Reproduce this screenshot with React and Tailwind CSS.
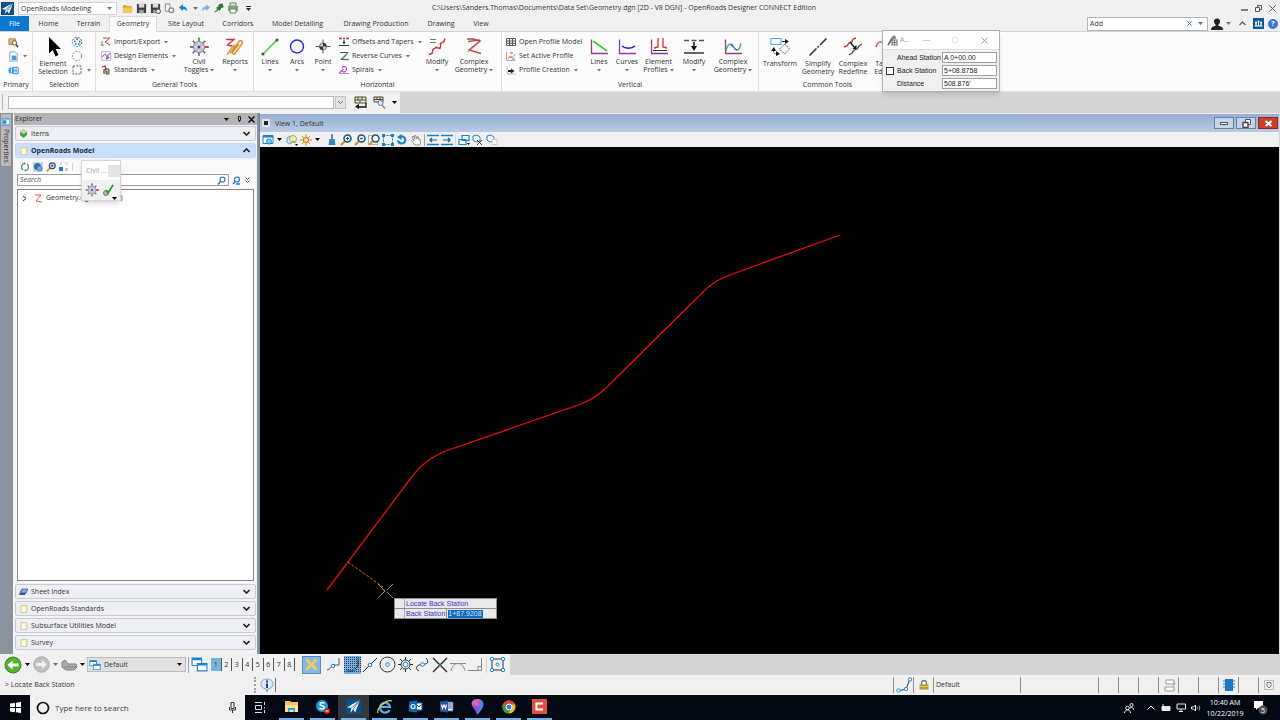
import React, { useState } from 'react';
import clsx from 'clsx';

const BLUE = '#1883c9';
const INK = '#222222';

// Small wrapper so every drawing shares the same svg setup
function Icon({ w = 10, h = w, box, className, children }) {
  return (
    <svg
      width={w}
      height={h}
      viewBox={box || `0 0 ${w} ${h}`}
      fill="none"
      className={clsx('shrink-0', className)}
      aria-hidden="true"
    >
      {children}
    </svg>
  );
}

const Caret = ({ className = 'text-gray-600' }) => (
  <Icon w={5} h={3} className={className}>
    <path d="M0 0h5L2.5 3z" fill="currentColor" />
  </Icon>
);

// Lighter, narrower arrow used under the ribbon labels
const SmallCaret = () => (
  <Icon w={4} h={3} className="text-gray-500">
    <path d="M0 0h4L2 2.500z" fill="currentColor" />
  </Icon>
);

const Magnifier = ({ w = 10, color = BLUE, mark, className }) => (
  <Icon w={w} box="0 0 12 12" className={className}>
    <path d="M1 11l4-4" stroke="#e08a2c" strokeWidth="2" />
    <circle cx="7.5" cy="4.5" r="3.5" stroke={color} strokeWidth="1.5" fill="#eef6fb" />
    {mark && <path d={mark} stroke={color} strokeWidth="1.2" />}
  </Icon>
);

const Gear = ({ w = 20 }) => (
  <Icon w={w} box="0 0 20 20">
    <path d="M10 1v18M1 10h18M3.8 3.8l12.4 12.4M16.2 3.8L3.8 16.2" stroke="#77738f" strokeWidth="1.8" />
    <circle cx="10" cy="10" r="5.6" fill="#c2bfd2" stroke="#8d89a5" strokeWidth="1" />
    <path d="M10 .5v3" stroke="#3fae49" strokeWidth="1.6" />
    <path d="M16.5 10H20" stroke="#d33" strokeWidth="1.6" />
    <path d="M10 5.5v9M5.5 10h9" stroke="#e7e5f0" strokeWidth="1" />
    <circle cx="10" cy="10" r="1.5" fill="#4a3f86" />
  </Icon>
);

const AppLogo = ({ w = 13 }) => (
  <Icon w={w} box="0 0 14 14">
    <rect width="14" height="14" fill="#0c4f86" />
    <path d="M1 7.6L13 1 8.6 12.6 6.6 9.6 4 13 5 8.4z" fill="#fff" />
    <path d="M5 8.4L13 1 6.6 9.6" stroke="#0c4f86" strokeWidth=".7" />
  </Icon>
);

const Windows2 = ({ w = 14 }) => (
  <Icon w={w} box="0 0 16 14">
    <path d="M1 1h9v7H1z" fill="#fff" stroke={BLUE} />
    <path d="M1 2h9" stroke={BLUE} strokeWidth="2" />
    <path d="M6 6h9v7H6z" fill="#fff" stroke={BLUE} />
    <path d="M6 7h9" stroke={BLUE} strokeWidth="2" />
  </Icon>
);

const Folder = () => (
  <Icon w={11} box="0 0 12 12">
    <path d="M1 2.5h4l1 1h5v7H1z" fill="#d79b2b" />
    <path d="M1 5h10.5l-1 5.5H1z" fill="#f3c75b" />
  </Icon>
);

const Floppy = ({ extra }) => (
  <Icon w={11} box="0 0 12 12">
    <path d="M1 1h10v10H1z" fill="#3d4045" />
    <path d="M3 1h6v4H3z" fill="#d8dade" />
    <path d="M3.5 7.5h5V11h-5z" fill="#9fa3a8" />
    {extra && <circle cx="9" cy="9" r="2.5" fill="#e8e8e8" stroke="#4a4a4a" />}
  </Icon>
);

const PageGear = () => (
  <Icon w={11} box="0 0 12 12">
    <path d="M1.5 1h5v8h-5z" fill="#f3f3f3" stroke="#8a8a8a" />
    <circle cx="8" cy="8" r="2.6" fill="#ececec" stroke="#8a8a8a" strokeWidth="1.4" />
  </Icon>
);

const Undo = ({ flip, color = BLUE }) => (
  <Icon w={10} box="0 0 12 12" className={flip ? '-scale-x-100' : ''}>
    <path d="M1 5.5L6 1.5v2.6c3 .1 5 2 5 6-1.2-2-2.6-2.7-5-2.7v2.1z" fill={color} />
  </Icon>
);

const Pin = () => (
  <Icon w={10} box="0 0 12 12">
    <path d="M6 2l4-1 1 4-2.5.5-2 3.500L3 6l3-2z" fill="#2c7a35" stroke="#2c7a35" />
    <path d="M5 7.5L1 11" stroke="#2c7a35" strokeWidth="1.3" />
  </Icon>
);

const Printer = () => (
  <Icon w={12} box="0 0 12 12">
    <path d="M3 1h6v3H3z" fill="#e4eee2" stroke="#6c8a67" />
    <path d="M1 4h10v5H1z" fill="#7fa578" />
    <path d="M3 7h6v4H3z" fill="#f5f8f4" stroke="#6c8a67" />
  </Icon>
);

// Ribbon drawings
const Cursor = () => (
  <Icon w={20} className="ml-1">
    <path d="M4 0v16.5l3.700-3.400 2.800 6.400 3-1.400-2.800-6.200h5.300z" fill="#000" />
  </Icon>
);

const LinesIcon = () => (
  <Icon w={20}>
    <path d="M3 17L17 3" stroke="#4fd04c" strokeWidth="1.6" />
    <circle cx="3" cy="17" r="1.6" fill="#555" />
    <circle cx="17" cy="3" r="1.6" fill="#555" />
  </Icon>
);

const ArcsIcon = () => (
  <Icon w={20}>
    <circle cx="10" cy="9.5" r="6.5" stroke="#2a2ad4" strokeWidth="1.4" />
  </Icon>
);

const PointIcon = () => (
  <Icon w={20}>
    <path d="M10 2.500v14M2.500 9.500h15" stroke="#555" />
    <circle cx="10" cy="9.5" r="3.5" fill="#cfcfcf" stroke="#777" />
    <path d="M10 6A3.500 3.500 0 0 1 13.500 9.500H10zM10 13A3.500 3.500 0 0 1 6.500 9.500H10z" fill="#333" />
  </Icon>
);

const ReportsIcon = () => (
  <Icon w={20}>
    <path d="M1 2.5h8L2.5 8 10 10" stroke="#d22f2f" strokeWidth="1.3" />
    <path d="M5 16.5L14 4.5c1.5-2 4.500 0 3.200 2L10 16.500c-1 1.500-3.200 0-2.200-1.400L14 7" stroke="#d9922f" strokeWidth="1.5" />
    <path d="M2 17.5L9.5 7.5" stroke="#e0a551" strokeWidth="1.5" />
  </Icon>
);

const ModifyH = () => (
  <Icon w={20}>
    <path d="M3 2.500h6M3 5.500h6" stroke="#777" />
    <path d="M2 17.500l3-1 1-4 3-2 4 1 1-5 3-2 1-3" stroke="#c93434" strokeWidth="1.4" />
    <path d="M9 10l5-5" stroke="#999" strokeDasharray="1.5 1" />
  </Icon>
);

const ComplexH = () => (
  <Icon w={20}>
    <path d="M4 4.500L16 3" stroke="#777" strokeWidth="1.4" />
    <path d="M3 2h6l7 2L5 13l12 3.500" stroke="#d03a3a" strokeWidth="1.4" />
    <path d="M4 15L13 7" stroke="#888" />
  </Icon>
);

const Axes = ({ children }) => (
  <Icon w={20}>
    <path d="M2.500 2.500v14h16.500" stroke="#8b3f96" strokeWidth="1.3" />
    {children}
  </Icon>
);

const ModifyV = () => (
  <Icon w={20}>
    <path d="M0 3.500h20" stroke="#555" strokeDasharray="5 2.5" strokeWidth="1.3" />
    <path d="M0 16h20" stroke="#555" strokeWidth="1.8" />
    <path d="M10 5v5" stroke="#111" strokeWidth="1.5" />
    <path d="M7 9h6l-3 5z" fill="#111" />
  </Icon>
);

const TransformIcon = () => (
  <Icon w={20}>
    <path d="M1 1.500h10v6H1z" stroke="#54b3e4" strokeWidth="1.2" />
    <path d="M12 4.500h4" stroke="#111" />
    <path d="M15 2l4 2.500L15 7z" fill="#111" />
    <path d="M14.500 7l5 5-5 5-5-5z" stroke="#444" strokeDasharray="1.6 1" />
    <path d="M1 14l3-4 2 4zM6 14l4 3-4 2z" fill="#111" />
    <path d="M3.500 13c0 3 1 4 3 4" stroke="#111" strokeDasharray="1.5 1" />
  </Icon>
);

const SimplifyIcon = () => (
  <Icon w={20}>
    <path d="M1.500 18.500l7-7M9.500 10.500l1.500-1.500M12 8l6.500-6.500" stroke="#333" strokeWidth="1.6" />
  </Icon>
);

const RedefineIcon = () => (
  <Icon w={20}>
    <path d="M1 10l3-1 2-3 3-1 1-3 3-1" stroke="#c93a3a" strokeWidth="1.4" />
    <path d="M6 18l3-2 2-3 3-1 2-3 3-2" stroke="#555" strokeWidth="1.4" />
    <path d="M7 5l5 6" stroke="#111" strokeWidth="1.3" />
    <path d="M9.500 12h4V8z" fill="#111" />
  </Icon>
);

const TableIcon = () => (
  <Icon w={20}>
    <path d="M2 10c2-7 6-6 9-2" stroke="#d34a4a" strokeWidth="1.4" />
    <path d="M8 17l6-7 3 3-6 5z" fill="#b87333" />
  </Icon>
);

const smallIcons = {
  folderSearch: (
    <Icon w={11} box="0 0 12 12">
      <path d="M1 2h7v6H1z" fill="#edc168" stroke="#a97b2a" />
      <circle cx="7" cy="6.5" r="2.5" fill="#f7f3e6" stroke="#6b4a1a" />
      <path d="M9 8.500l2 2.500" stroke="#333" strokeWidth="1.6" />
    </Icon>
  ),
  page: (
    <Icon w={11} box="0 0 12 12">
      <path d="M2 1h6l2 2v8H2z" fill="#fff" stroke="#8c9cad" />
      <path d="M4 5h5v5H4z" fill="#3f9fdc" />
    </Icon>
  ),
  info: (
    <Icon w={11} box="0 0 12 12">
      <path d="M5 2.500h6v7H5z" fill="#fff" stroke={BLUE} />
      <path d="M7 4.500h3M7 6h3M7 7.500h3" stroke={BLUE} strokeWidth=".8" />
      <circle cx="3.7" cy="6" r="3.2" fill="#2e9be0" />
      <path d="M3.700 3.800v4.500" stroke="#fff" />
    </Icon>
  ),
  selAll: (
    <Icon w={12}>
      <circle cx="6" cy="6" r="4.7" stroke="#2b6f9f" strokeDasharray="2 1.2" />
      <path d="M5.500 3h1.500M3 5.500h1.500M8 5.500h1.500M4 8h1.500M7 8h1.500" stroke="#1c5b8c" strokeWidth="1.4" />
    </Icon>
  ),
  selNone: (
    <Icon w={12}>
      <circle cx="6" cy="6" r="4.5" stroke="#888" strokeDasharray="2 1.2" />
    </Icon>
  ),
  selBox: (
    <Icon w={12}>
      <path d="M2 2h8v8H2z" stroke="#555" strokeDasharray="2 1.3" />
    </Icon>
  ),
  importExport: (
    <Icon w={10}>
      <path d="M2 1h7L4 5l5 3" stroke="#c94545" />
      <path d="M1 4v5M0 7.500L1.500 9 3 7.500" stroke="#3a9d46" />
    </Icon>
  ),
  design: (
    <Icon w={10}>
      <path d="M.5.5v9h9v-9z" stroke="#cbbbe0" fill="#f5effa" />
      <path d="M1 6l3-3 2 3 3-4" stroke="#b84bc0" />
      <path d="M5 8l3-2" stroke="#2f7fd0" strokeWidth="1.6" />
      <circle cx="6" cy="5" r="1" fill="#e8882f" />
    </Icon>
  ),
  standards: (
    <Icon w={10}>
      <path d="M1 2l3-1 1 3-2 1v4" stroke="#9b3030" strokeWidth="1.3" />
      <path d="M5 4h3v5H5z" stroke="#5d4b3a" fill="#dfcfa8" />
      <path d="M4 7h4" stroke="#2f8b50" />
    </Icon>
  ),
  offsets: (
    <Icon w={10}>
      <path d="M0 1.500h3M4 1.500h2M7 1.500h3" stroke="#c33" strokeWidth="1.3" />
      <path d="M0 8.500h10" stroke="#444" />
      <path d="M5 3v3" stroke="#222" />
      <path d="M3.500 5h3L5 7.500z" fill="#222" />
    </Icon>
  ),
  reverse: (
    <Icon w={10}>
      <path d="M1 1.500h8L2 8.500h8" stroke="#555" />
      <path d="M2 8c3-1 4-2 6-5" stroke="#31a047" strokeWidth="1.2" />
      <path d="M5 8.500h5" stroke="#2a6fc9" strokeWidth="1.3" />
    </Icon>
  ),
  spirals: (
    <Icon w={10}>
      <path d="M3.500 3.500C3 1 7.500.5 7.500 4S4 7.500 3 6M5 4.500c-3 0-3 3-5 3.500" stroke="#bb44c4" strokeWidth="1.1" />
      <path d="M0 8.500h10" stroke="#b78abf" />
    </Icon>
  ),
  table: (
    <Icon w={10}>
      <path d="M.5 1.500h9v7h-9zM.5 4h9M.5 6.300h9M3.500 1.500v7M6.500 1.500v7" stroke="#5b5363" />
    </Icon>
  ),
  profile: (
    <Icon w={10}>
      <path d="M.5 1v8.500h9" stroke="#b9a3c8" />
      <path d="M2 8l2-3 2 2 3-4" stroke="#e2813f" />
      <path d="M4 1h3v2H4zM6 7h3v2H6z" fill="#8fbbe6" />
      <circle cx="5" cy="6" r="1.2" fill="#e9a13a" />
    </Icon>
  ),
  creation: (
    <Icon w={10}>
      <path d="M1 1v8h9" stroke="#c3b6cc" />
      <path d="M2 5h3V3.500l3.500 2.500L5 8.500V7H2z" fill="#222" />
    </Icon>
  ),
};

const tabs = [
  ['Home', 'w-[39px]'],
  ['Terrain', 'w-[41px]'],
  ['Geometry', 'w-[48px]'],
  ['Site Layout', 'w-[58px]'],
  ['Corridors', 'w-[46px]'],
  ['Model Detailing', 'w-[73px]'],
  ['Drawing Production', 'w-[84px]'],
  ['Drawing', 'w-[46px]'],
  ['View', 'w-[34px]'],
];

function TitleBar() {
  return (
    <header className="flex h-4 items-center bg-[#f0f0f0] pl-px pr-1 text-[#333]">
      <AppLogo />
      <label className="relative ml-1 flex h-[13px] w-[99px] items-center border border-[#d0d0d0] bg-white">
        <select aria-label="Workflow" className="w-full appearance-none bg-white pl-[2px] text-[7px] leading-[11px] outline-none">
          <option>OpenRoads Modeling</option>
        </select>
        <Caret className="absolute right-1 text-gray-500" />
      </label>
      <div className="ml-[5px] flex items-center gap-[3px]">
        <button aria-label="Open"><Folder /></button>
        <button aria-label="Save"><Floppy /></button>
        <button aria-label="Save Settings"><Floppy extra /></button>
        <button aria-label="Settings"><PageGear /></button>
        <button aria-label="Undo" className="flex items-center gap-[5px]"><Undo /><Caret className="text-gray-500" /></button>
        <button aria-label="Redo"><Undo flip color="#7db8e0" /></button>
        <button aria-label="Pin"><Pin /></button>
        <button aria-label="Print"><Printer /></button>
        <button aria-label="Customize" className="ml-1 border-t border-gray-800 pt-px"><Caret className="text-gray-800" /></button>
      </div>
      <h1 className="flex-1 text-center text-[7px]">
        C:\Users\Sanders.Thomas\Documents\Data Set\Geometry.dgn [2D - V8 DGN] - OpenRoads Designer CONNECT Edition
      </h1>
      <div className="ml-[244px] flex items-center gap-[7px] text-gray-600">
        <button aria-label="Minimize"><Icon w={7}><path d="M0 5h7" stroke="currentColor" strokeWidth="1.5" /></Icon></button>
        <button aria-label="Restore"><Icon w={7}><path d="M.5 2.500h4v4h-4zM2.500 2.500v-2h4v4h-2" stroke="currentColor" /></Icon></button>
        <button aria-label="Close"><Icon w={7}><path d="M.5.5l6 6M6.500.5l-6 6" stroke="currentColor" /></Icon></button>
      </div>
    </header>
  );
}

function TabBar() {
  const [active, setActive] = useState('Geometry');
  return (
    <nav className="flex h-4 items-end border-b border-[#cfd2d8] bg-[#f0f0f0] text-[7px] text-[#333]">
      <button className="h-[15px] w-[29px] bg-[#0a78cf] text-white">File</button>
      {tabs.map(([name, width]) => (
        <button
          key={name}
          onClick={() => setActive(name)}
          className={clsx(
            'whitespace-nowrap text-center',
            width,
            active === name ? '-mb-px h-4 border-x border-t border-[#d9dbe0] bg-[#fbfbfb] pb-px' : 'h-[15px]'
          )}
        >
          {name}
        </button>
      ))}
      <div className="ml-auto flex h-[15px] items-center pr-[2px]">
        <label className="flex h-[14px] w-[121px] items-center border border-[#b5b5b5] bg-white pr-1">
          <input aria-label="Search ribbon" defaultValue="Add" className="min-w-0 flex-1 bg-white pl-[2px] outline-none" />
          <Icon w={5} className="mr-[6px]"><path d="M.5.5l4 4M4.500.5l-4 4" stroke="#2f7fc4" /></Icon>
          <Caret className="text-gray-500" />
        </label>
        <button aria-label="Account" className="ml-[3px] flex items-center gap-[3px]">
          <Icon w={12}>
            <circle cx="6" cy="3.5" r="3" fill="#1f2328" />
            <path d="M0 12c0-3 2-4 4.500-4V5h3v3C10 8 12 9 12 12z" fill="#1f2328" />
          </Icon>
          <Caret className="text-gray-500" />
        </button>
        <button aria-label="Collapse ribbon" className="ml-[8px]"><Icon w={7} h={5}><path d="M.5 4L3.500 1l3 3" stroke="#555" strokeWidth="1.2" /></Icon></button>
        <button aria-label="Connect" className="ml-[7px]">
          <Icon w={11}>
            <rect width="11" height="11" fill="#0f5694" />
            <circle cx="3" cy="4.5" r="1" fill="#fff" /><circle cx="5.5" cy="3.5" r="1" fill="#fff" /><circle cx="8" cy="4.5" r="1" fill="#fff" />
            <path d="M3 5v3M5.500 4v4M8 5v3M1.500 8h8" stroke="#fff" strokeWidth="1.2" />
          </Icon>
        </button>
        <button aria-label="Help" className="ml-1 flex h-[10px] w-[10px] items-center justify-center rounded-full bg-[#3c74cf] text-[7px] font-bold text-white">?</button>
      </div>
    </nav>
  );
}

function Group({ label, width, children }) {
  return (
    <section className={clsx('flex shrink-0 flex-col border-r border-[#dcdcdf]', width)}>
      <div className="flex flex-1">{children}</div>
      <h2 className="h-3 text-center leading-3">{label}</h2>
    </section>
  );
}

function BigButton({ icon, lines, width, caret, low }) {
  return (
    <button className={clsx('flex shrink-0 flex-col items-center whitespace-nowrap pt-[5px] leading-[8px]', width)}>
      {icon}
      <span className={low ? 'mt-[3px]' : 'mt-px'}>{lines[0]}</span>
      {lines[1] && (
        <span className="flex items-center gap-[2px]">
          {lines[1]}
          {caret && <SmallCaret />}
        </span>
      )}
      {!lines[1] && caret && <span className="mt-[3px] flex"><SmallCaret /></span>}
    </button>
  );
}

function SmallButton({ icon, label, caret, aria }) {
  return (
    <button aria-label={aria} className="flex h-[14px] items-center whitespace-nowrap">
      <span className="flex w-3 shrink-0 justify-center">{smallIcons[icon]}</span>
      {label && <span className="ml-[2px]">{label}</span>}
      {caret && <span className="ml-1 flex"><SmallCaret /></span>}
    </button>
  );
}

const SmallColumn = ({ className, children }) => (
  <div className={clsx('flex shrink-0 flex-col items-start pt-[3px]', className)}>{children}</div>
);

function Ribbon() {
  return (
    <div className="flex h-[60px] overflow-hidden border-b border-[#e2e2e2] bg-[#fbfbfb] text-[7px] text-[#333]">
      <Group label="Primary" width="w-[33px]">
        <SmallColumn className="pl-[7px]">
          <SmallButton icon="folderSearch" aria="Explorer" />
          <SmallButton icon="page" aria="Models" caret />
          <SmallButton icon="info" aria="Properties" />
        </SmallColumn>
      </Group>
      <Group label="Selection" width="w-[63px]">
        <BigButton icon={<Cursor />} lines={['Element', 'Selection']} width="w-10" low />
        <SmallColumn className="-ml-[2px]">
          <SmallButton icon="selAll" aria="Select All" />
          <SmallButton icon="selNone" aria="Select None" />
          <SmallButton icon="selBox" aria="Select By" caret />
        </SmallColumn>
      </Group>
      <Group label="General Tools" width="w-[158px]">
        <SmallColumn className="w-[85px] pl-1">
          <SmallButton icon="importExport" label="Import/Export" caret />
          <SmallButton icon="design" label="Design Elements" caret />
          <SmallButton icon="standards" label="Standards" caret />
        </SmallColumn>
        <BigButton icon={<Gear />} lines={['Civil', 'Toggles']} width="w-9" caret />
        <BigButton icon={<ReportsIcon />} lines={['Reports']} width="w-9" caret />
      </Group>
      <Group label="Horizontal" width="w-[248px]">
        <BigButton icon={<LinesIcon />} lines={['Lines']} width="w-8" caret />
        <BigButton icon={<ArcsIcon />} lines={['Arcs']} width="w-[22px]" caret />
        <BigButton icon={<PointIcon />} lines={['Point']} width="w-[30px]" caret />
        <SmallColumn className="w-[84px]">
          <SmallButton icon="offsets" label="Offsets and Tapers" caret />
          <SmallButton icon="reverse" label="Reverse Curves" caret />
          <SmallButton icon="spirals" label="Spirals" caret />
        </SmallColumn>
        <BigButton icon={<ModifyH />} lines={['Modify']} width="w-[30px]" caret />
        <BigButton icon={<ComplexH />} lines={['Complex', 'Geometry']} width="w-[44px]" caret />
      </Group>
      <Group label="Vertical" width="w-[257px]">
        <SmallColumn className="w-[83px] pl-[3px]">
          <SmallButton icon="table" label="Open Profile Model" />
          <SmallButton icon="profile" label="Set Active Profile" />
          <SmallButton icon="creation" label="Profile Creation" caret />
        </SmallColumn>
        <BigButton icon={<Axes><path d="M4 4l14 10" stroke="#3ecb3a" strokeWidth="1.6" /></Axes>} lines={['Lines']} width="w-[28px]" caret />
        <BigButton icon={<Axes><path d="M5 9c3 3 10 3 13 0" stroke="#2222c8" strokeWidth="1.6" /></Axes>} lines={['Curves']} width="w-[28px]" caret />
        <BigButton
          icon={
            <Axes>
              <path d="M5 11l4-1V1M18 11l-4-1V1" stroke="#d03434" strokeWidth="1.3" />
              <path d="M4 13.500h14" stroke="#333" />
            </Axes>
          }
          lines={['Element', 'Profiles']}
          width="w-[35px]"
          caret
        />
        <BigButton icon={<ModifyV />} lines={['Modify']} width="w-[36px]" caret />
        <BigButton
          icon={
            <Axes>
              <path d="M3 14c2-8 4-8 6-5" stroke="#44b64a" strokeWidth="1.3" />
              <path d="M8 7c3 2 3 6 6 6" stroke="#2a45c9" strokeWidth="1.3" />
              <path d="M14 13c3 0 3-4 4-7" stroke="#44b64a" strokeWidth="1.3" />
            </Axes>
          }
          lines={['Complex', 'Geometry']}
          width="w-[42px]"
          caret
        />
      </Group>
      <Group label="Common Tools" width="w-[138px]">
        <BigButton icon={<TransformIcon />} lines={['Transform']} width="w-[42px]" low />
        <BigButton icon={<SimplifyIcon />} lines={['Simplify', 'Geometry']} width="w-[34px]" low />
        <BigButton icon={<RedefineIcon />} lines={['Complex', 'Redefine']} width="w-[36px]" low />
        <BigButton icon={<TableIcon />} lines={['Table', 'Editor']} width="w-[26px]" low />
      </Group>
    </div>
  );
}

function KeyinBar() {
  return (
    <div className="flex h-[21px] bg-[#d5d5d5]">
      <div className="flex w-[400px] items-center bg-[#f0f0f0] pb-px pl-[2px]">
        <span className="mr-[5px] h-4 border-l border-[#b5b5b5]" />
        <input aria-label="Search tools" className="h-[13px] w-[326px] border border-[#b8b8b8] bg-white text-[7px]" />
        <button aria-label="History" className="ml-px flex h-[13px] w-[11px] items-center justify-center border border-[#c4c4c4] bg-[#e3e3e3]">
          <Icon w={5} h={3}><path d="M0 0l2.500 2.500L5 0" stroke="#777" /></Icon>
        </button>
        <button aria-label="Key-in" className="ml-2">
          <Icon w={13}>
            <path d="M1 1h11v6H1z" fill="#f5eeb8" stroke="#444" />
            <path d="M1 4h11M4 1v3M8 1v3M6 4v3" stroke="#444" />
            <path d="M12 7v4H4" stroke="#111" strokeWidth="1.3" />
            <path d="M5 8v5L1 10.500z" fill="#111" />
          </Icon>
        </button>
        <button aria-label="Find key-in" className="ml-[6px]">
          <Icon w={13}>
            <path d="M1 1h9v5H1z" fill="#f5eeb8" stroke="#444" />
            <path d="M1 3.500h9M4 1v3M7 1v3" stroke="#444" />
            <circle cx="7.5" cy="7" r="2.5" fill="#dceefa" stroke="#3f87bd" />
            <path d="M9 9l3 3.500" stroke="#d08a35" strokeWidth="1.6" />
          </Icon>
        </button>
        <button aria-label="More" className="ml-[6px]"><Caret className="text-black" /></button>
      </div>
    </div>
  );
}

const Cylinder = () => (
  <Icon w={8} h={9}>
    <path d="M1 1.500h6v7H1z" fill="#f6edcb" stroke="#d8cb9c" />
    <path d="M2 3h3v5H2z" fill="#fffbe9" />
  </Icon>
);

function Chevron({ up }) {
  return (
    <Icon w={7} h={5}>
      <path d={up ? 'M.5 4L3.500 1l3 3' : 'M.5 1l3 3 3-3'} stroke="#222" strokeWidth="1.6" />
    </Icon>
  );
}

function PanelRow({ icon, label, open }) {
  return (
    <button
      className={clsx(
        'flex h-[15px] w-full shrink-0 items-center rounded-[2px] border pl-1 pr-[5px] text-left text-[7px]',
        open ? 'border-[#c4dafa] bg-[#c9defb] font-bold text-[#1b2a3d]' : 'border-[#c9cbd2] bg-[#eeeff4] text-[#333]'
      )}
    >
      <span className="flex w-[7px] justify-center">{icon}</span>
      <span className="ml-1 flex-1">{label}</span>
      <Chevron up={open} />
    </button>
  );
}

function Explorer() {
  return (
    <aside className="flex w-[246px] shrink-0 flex-col border-r-2 border-[#8b939d] bg-[#f3f3f5] pl-px">
      <div className="flex h-3 shrink-0 items-center bg-[#b4b4b4] pl-px pr-[2px] text-[7px] text-[#333]">
        <h2 className="flex-1">Explorer</h2>
        <button aria-label="Panel menu"><Caret className="text-black" /></button>
        <button aria-label="Auto hide" className="ml-2"><Icon w={5} h={6}><path d="M1.500.5h2v4h-2zM2.500 4v2" stroke="#222" /></Icon></button>
        <button aria-label="Close panel" className="ml-[6px]"><Icon w={7}><path d="M.5.5l6 6M6.500.5l-6 6" stroke="#111" strokeWidth="1.5" /></Icon></button>
      </div>
      <div className="flex flex-1 flex-col gap-[2px] px-px pt-px">
        <PanelRow
          icon={<Icon w={7} h={9}><path d="M3.500 0L7 3v3L3.500 9 0 6V3z" fill="#4f9e3c" /><path d="M3.500 0L7 3 3.500 5 0 3z" fill="#b7d9ae" /></Icon>}
          label="Items"
        />
        <PanelRow icon={<Cylinder />} label="OpenRoads Model" open />
        <div className="flex flex-1 flex-col bg-[#fafafa] px-[2px] pb-px">
          <div className="flex h-[13px] items-center gap-[3px] pl-[3px]">
            <button aria-label="Refresh"><Icon w={10}><path d="M4 1.500A3.800 3.800 0 0 0 3 8M6 8.500A3.800 3.800 0 0 0 7 2" stroke="#5d8f84" strokeWidth="1.3" /><path d="M4 0v3L6 1.500zM6 7v3L4 8.500z" fill="#5d8f84" /></Icon></button>
            <button aria-label="World" className="bg-[#bcd7ef]"><Icon w={10}><circle cx="4.5" cy="4.5" r="3.5" fill="#2f6fb5" /><circle cx="6.5" cy="6.5" r="2.5" fill="#89abd2" stroke="#3a6aa0" strokeWidth=".7" /></Icon></button>
            <button aria-label="Zoom to"><Magnifier w={10} color="#244f78" mark="M6 4.500h3M7.500 3v3" /></button>
            <button aria-label="Views"><Icon w={10}><path d="M0 0h3v3H0zM6 0h3v3H6z" fill="#dde6ef" /><path d="M0 5h4v4H0z" fill="#2377c4" /><path d="M6 6h3v3H6z" fill="#b9cee4" /></Icon></button>
            <span className="h-2 border-l border-gray-300" />
          </div>
          <div className="flex h-[14px] items-center">
            <label className="flex h-3 flex-1 items-center border border-[#9f9f9f] bg-white pr-[2px]">
              <input aria-label="Search" placeholder="Search" className="min-w-0 flex-1 pl-[2px] text-[7px] italic outline-none placeholder:text-gray-600" />
              <Icon w={9}><circle cx="5.5" cy="3.5" r="2.5" stroke="#2f6fc4" strokeWidth="1.2" /><path d="M3.500 5.500L1 8.500" stroke="#2f6fc4" strokeWidth="1.5" /></Icon>
            </label>
            <button aria-label="Advanced search" className="ml-[3px]"><Icon w={9}><circle cx="5" cy="3.5" r="2.5" stroke="#2f6fc4" strokeWidth="1.2" /><path d="M3 5.500L1 8M4 8h4" stroke="#2f6fc4" strokeWidth="1.3" /></Icon></button>
            <button aria-label="More options" className="mx-1"><Icon w={5} h={6}><path d="M.5.5l2 2 2-2M.5 3.500l2 2 2-2" stroke="#2f5f9f" /></Icon></button>
          </div>
          <ul className="mt-[2px] flex-1 border border-[#858585] bg-white text-[7px] text-[#333]">
            <li className="mt-[3px] flex items-center pl-1">
              <Icon w={5} h={7}><path d="M1 1l3 2.500L1 6" stroke="#333" /></Icon>
              <Icon w={9} className="ml-[7px] mr-[3px]"><path d="M1 1h6L2 7l6 1" stroke="#dc5555" /></Icon>
              <span>Geometry.dgn (Default)</span>
            </li>
          </ul>
        </div>
        <PanelRow icon={<Icon w={9} h={8}><path d="M2 2h6L6 7H0z" fill="#3a5a9f" /><path d="M3 1h6L7 5H1z" fill="#8ca8dc" stroke="#2e4a85" strokeWidth=".7" /></Icon>} label="Sheet Index" />
        <PanelRow icon={<Cylinder />} label="OpenRoads Standards" />
        <PanelRow icon={<Cylinder />} label="Subsurface Utilities Model" />
        <PanelRow icon={<Cylinder />} label="Survey" />
        <span className="h-[2px]" />
      </div>
    </aside>
  );
}

const DARK = '#24506e';

function ViewToolbar() {
  return (
    <div className="flex h-[15px] items-center bg-[#f0f0f0] pl-[2px]">
      <button aria-label="View attributes" className="flex items-center gap-[3px]">
        <Icon w={12}><path d="M1 1.500h10v8H1z" fill="#fff" stroke={BLUE} /><path d="M1 2.500h10" stroke={BLUE} strokeWidth="2" /><circle cx="7" cy="7.5" r="2.5" fill="#8cc4ea" stroke={BLUE} /></Icon>
        <Caret className="text-black" />
      </button>
      <button aria-label="Display style" className="ml-1">
        <Icon w={12}>
          <path d="M1 4l3-2 3 2v4l-3 2-3-2z" fill="#d6ecf6" stroke="#5aa5c8" />
          <circle cx="7" cy="5" r="3.5" fill="#e5f2d2" fillOpacity=".8" stroke="#d99c39" />
          <path d="M5 7h4l2 2H7z" fill="#8fc06a" />
          <path d="M9 10h3l-1.500 2z" fill="#111" />
        </Icon>
      </button>
      <button aria-label="Brightness" className="ml-[2px] flex items-center gap-[3px]">
        <Icon w={12}><path d="M6 0v12M0 6h12M2 2l8 8M10 2l-8 8" stroke="#d98a35" /><circle cx="6" cy="6" r="2.6" fill="#f6d793" stroke="#c8772a" /></Icon>
        <Caret className="text-black" />
      </button>
      <button aria-label="Update view" className="ml-[6px]"><Icon w={12}><path d="M6 0v6" stroke="#2a6fa8" strokeWidth="1.5" /><path d="M3.500 5h5l1 6h-7z" fill="#2f86c8" /></Icon></button>
      <div className="ml-[2px] flex items-center gap-[2px]">
        <button aria-label="Zoom in"><Magnifier w={12} color={DARK} mark="M6 4.500h3M7.500 3v3" /></button>
        <button aria-label="Zoom out"><Magnifier w={12} color={DARK} mark="M6 4.500h3" /></button>
        <button aria-label="Window area">
          <Icon w={12}>
            <path d="M.5 1.500h9v9h-9z" stroke="#777" strokeDasharray="1 1" />
            <path d="M1 11l4-4" stroke="#e08a2c" strokeWidth="2" />
            <circle cx="7.5" cy="4.5" r="3.5" stroke={DARK} strokeWidth="1.4" fill="#eef6fb" />
          </Icon>
        </button>
        <button aria-label="Fit view"><Icon w={12}><path d="M1.500 1.500h9v9h-9z" stroke={BLUE} strokeDasharray="2 1" /><path d="M0 0h3v3H0zM9 0h3v3H9zM0 9h3v3H0zM9 9h3v3H9z" fill={BLUE} /></Icon></button>
        <button aria-label="Rotate view"><Icon w={12}><path d="M3 8a3.500 3.500 0 1 0 1-5" stroke={BLUE} strokeWidth="2.2" /><path d="M5.500 0v6L1 3z" fill={BLUE} /><path d="M1 6l3 1-2 3z" fill={BLUE} /></Icon></button>
        <button aria-label="Pan view"><Icon w={12}><path d="M5 11L1.500 6.500l1-1 2 1.500-2.500-4 1-1 2 3-.5-3.500h1l1.500 3.500.5-2.500 1 .5.5 3 1-.5.500 3.500-1 2z" fill="#fff" stroke="#777" strokeWidth=".8" /></Icon></button>
      </div>
      <span className="mx-[2px] h-3 border-l border-gray-400" />
      <button aria-label="View previous"><Icon w={12}><path d="M0 1.500h12M0 10.500h12" stroke={BLUE} strokeWidth="1.5" /><path d="M3 6h7M5 4L3 6l2 2" stroke="#1b5f96" strokeWidth="1.2" /></Icon></button>
      <button aria-label="View next" className="ml-[2px]"><Icon w={12}><path d="M0 1.500h12M0 10.500h12" stroke={BLUE} strokeWidth="1.5" /><path d="M2 6h7M7 4l2 2-2 2" stroke="#1b5f96" strokeWidth="1.2" /></Icon></button>
      <span className="mx-[2px] h-3 border-l border-gray-300" />
      <button aria-label="Copy view"><Icon w={12}><path d="M4 1.500h7v5H4zM1 5.500h7v5H1z" fill="#fff" stroke={BLUE} strokeWidth="1.2" /><path d="M9 9h3l-1.500 2z" fill="#111" /></Icon></button>
      <button aria-label="Clip volume" className="ml-[2px]"><Icon w={12}><path d="M1 2l4-1 3 2v4L4 8 1 6z" fill="#fff" stroke={BLUE} /><path d="M5 6l5 5M10 6l-5 5" stroke="#333" /></Icon></button>
      <button aria-label="Clip mask" className="ml-[2px]"><Icon w={12}><path d="M1 2l4-1 3 2v4L4 8 1 6z" fill="#fff" stroke={BLUE} /><path d="M6 5.500h5v5H6z" fill="#fff" stroke="#ccc" /></Icon></button>
    </div>
  );
}

function ViewWindow() {
  return (
    <main className="flex min-w-0 flex-1 flex-col border-l border-r border-[#6f8296] border-r-[#d5d5d5] bg-[#f0f0f0] pt-px">
      <div className="flex h-[18px] items-center bg-linear-to-b from-[#96aed0] to-[#b8cbe4] pl-[2px] text-[7px] text-[#333]">
        <span className="flex h-2 w-2 items-center justify-center bg-[#dfe3e8]"><i className="h-1 w-1 bg-[#222]" /></span>
        <h2 className="ml-[5px] flex-1 pt-px">View 1, Default</h2>
        <button aria-label="Minimize view" className="flex h-3 w-5 items-center justify-center border border-[#6883a5] bg-[#c3d3e8]"><i className="h-[3px] w-2 border border-[#555] bg-white" /></button>
        <button aria-label="Restore view" className="ml-[2px] flex h-3 w-5 items-center justify-center border border-[#6883a5] bg-[#c3d3e8]">
          <Icon w={9}><path d="M3.500.5h5v5h-5z" fill="#fff" stroke="#555" /><path d="M1 3.500h5v5H1z" fill="#fff" stroke="#444" strokeWidth="1.3" /></Icon>
        </button>
        <button aria-label="Close view" className="ml-[2px] mr-px flex h-3 w-5 items-center justify-center border border-[#8c2a22] bg-[#c9402f]">
          <Icon w={9} h={7}><path d="M1.500 1l6 5M7.500 1l-6 5" stroke="#fff" strokeWidth="2" /></Icon>
        </button>
      </div>
      <ViewToolbar />
      <div className="relative flex-1 overflow-hidden bg-black">
        <svg className="absolute inset-0 h-full w-full" fill="none" aria-label="Alignment">
          <path
            d="M67 443L151 331Q163 314 183 305L321 257Q334 252 345 242L443 145Q453 135 467 129L580 88"
            stroke="#e60f0f"
            strokeWidth="1.3"
          />
          <path d="M88 415L123 440" stroke="#c2702c" strokeDasharray="3 1.5" />
          <path d="M118 437l7 7M133 451l-6-6M133 437l-6 6M118 451l7-7" stroke="#b9b9b9" strokeWidth=".8" />
        </svg>
        <div className="absolute left-[134px] top-[451px] w-[103px] border border-[#8d8d8d] bg-[#e9e9e9] font-['Liberation_Sans',sans-serif] text-[7px] leading-[9px] text-[#3a2fd0]">
          <div className="ml-[9px] border-l border-[#aaa] pl-px">Locate Back Station</div>
          <label className="flex border-t border-[#8d8d8d]">
            <span className="ml-[9px] border-l border-[#aaa] pl-px pr-px">Back Station</span>
            <span className="flex flex-1 items-center border-l border-[#8d8d8d] pl-px">
              <input defaultValue="1+87.9208" className="h-2 w-[35px] bg-[#0f6ac0] text-[7px] text-[#cfe6fb] outline-none" />
            </span>
          </label>
        </div>
      </div>
    </main>
  );
}

function SnapBar() {
  const [view, setView] = useState(1);
  return (
    <div className="flex h-[21px] shrink-0 bg-[#d5d5d5] text-[7px] text-[#333]">
      <div className="flex items-center bg-[#f0f0f0] pl-1 pr-[2px]">
        <button aria-label="Back" className="flex items-center gap-[3px]">
          <Icon w={18}><circle cx="9" cy="9" r="8" fill="#58b032" stroke="#2f8a1b" /><path d="M3.500 9L8.500 4.500v3h6v3h-6v3z" fill="#fff" /></Icon>
          <Caret className="text-black" />
        </button>
        <button aria-label="Forward" className="ml-[3px] flex items-center gap-[3px]">
          <Icon w={17}><circle cx="8.5" cy="8.5" r="7.7" fill="#c2c2c2" stroke="#a5a5a5" /><path d="M14 8.500L9 4v3H3v3h6v3z" fill="#eee" /></Icon>
          <Caret className="text-gray-500" />
        </button>
        <button aria-label="Models" className="ml-[3px] flex items-center gap-[2px]">
          <Icon w={17} h={13}><path d="M1 4l3-2 3 4h8l1 3-3 3H5L1 9z" fill="#a9aeb4" stroke="#7c8187" /><path d="M3 9h12" stroke="#7c8187" /></Icon>
          <Caret className="text-black" />
        </button>
        <label className="relative ml-[2px] flex h-[15px] w-[99px] items-center border border-[#bcbcbc] bg-[#e0e0e0] pl-px">
          <Windows2 w={12} />
          <select aria-label="View group" className="w-full appearance-none bg-transparent pl-[3px] outline-none">
            <option>Default</option>
          </select>
          <Caret className="absolute right-[3px] text-black" />
        </label>
        <span className="mx-[2px] h-4 border-l border-gray-400" />
        <button aria-label="Manage view groups"><Windows2 w={17} /></button>
        <div className="ml-[3px] flex w-[84px]">
          {[1, 2, 3, 4, 5, 6, 7, 8].map((n) => (
            <button
              key={n}
              onClick={() => setView(n)}
              className={clsx('h-[13px] flex-1 border-r border-[#555]', view === n && 'bg-[#7ab3e2]')}
            >
              {n}
            </button>
          ))}
        </div>
      </div>
      <div className="flex items-center gap-[2px] bg-[#f0f0f0] pl-[5px] pr-1">
        <button aria-label="AccuSnap" className="flex h-[18px] w-[19px] items-center justify-center border border-[#4f8dc4] bg-[#8ab8e0]">
          <Icon w={13}><path d="M1.500 1.500l10 10M11.500 1.500l-10 10" stroke="#f0cf62" strokeWidth="2.8" /></Icon>
        </button>
        <button aria-label="Nearest snap" className="ml-[3px]"><Icon w={16}><path d="M1 13c4-1 4-4 7-5h5V1" stroke="#555" /><circle cx="7" cy="9" r="1.8" fill="#fff" stroke={BLUE} /></Icon></button>
        <button aria-label="Keypoint snap" className="bg-[#7fb0dc]">
          <Icon w={17} h={18}>
            <path d="M0 1.500h17M0 3.500h17M0 5.500h17M0 7.500h17M0 9.500h17M0 11.500h17M0 13.500h17M0 15.500h17" stroke="#24394d" strokeDasharray="1 1" />
            <path d="M2 15h7l5-5V2" stroke="#222" /><circle cx="14" cy="3" r="1.5" fill={BLUE} /><circle cx="3" cy="15" r="1.5" fill={BLUE} /><circle cx="10" cy="14" r="1.5" fill={BLUE} />
          </Icon>
        </button>
        <button aria-label="Midpoint snap"><Icon w={14}><path d="M0 14L14 0" stroke={INK} /><circle cx="7" cy="7" r="1.8" fill="#fff" stroke={BLUE} /></Icon></button>
        <button aria-label="Center snap"><Icon w={17}><circle cx="8.5" cy="8.5" r="7.5" stroke="#333" /><circle cx="8.5" cy="8.5" r="1.8" stroke={BLUE} /></Icon></button>
        <button aria-label="Origin snap"><Icon w={15}><path d="M7.500 0v15M0 7.500h15M2 2l11 11M13 2L2 13" stroke="#333" /><circle cx="7.5" cy="7.5" r="4.5" fill="#f0f0f0" stroke="#333" /><circle cx="7.5" cy="7.5" r="2.5" fill="#dff0fb" stroke={BLUE} /></Icon></button>
        <button aria-label="Bisector snap"><Icon w={15}><path d="M4 14c-4-2-3-6 2-6.500 6 0 9-2 5-6.500" stroke="#333" /><circle cx="7.5" cy="7.5" r="1.8" fill="#fff" stroke={BLUE} /></Icon></button>
        <button aria-label="Intersection snap"><Icon w={16}><path d="M1 1l14 14M15 1L1 15" stroke={INK} strokeWidth="1.3" /><circle cx="8" cy="8" r="1.5" fill={BLUE} /></Icon></button>
        <button aria-label="Tangent snap"><Icon w={16}><path d="M0 6.500h16M1 14c2-10 12-10 14 0" stroke="#888" /></Icon></button>
        <button aria-label="Perpendicular snap"><Icon w={15}><path d="M0 13.500h13.500V1M10 13V9.500h3" stroke="#888" /></Icon></button>
        <span className="ml-px h-4 border-l border-gray-300" />
        <button aria-label="Multi-snap"><Icon w={17}><path d="M3 3h11v11H3z" stroke="#333" /><circle cx="3" cy="3" r="1.7" fill="#fff" stroke={BLUE} /><circle cx="14" cy="3" r="1.7" fill="#fff" stroke={BLUE} /><circle cx="3" cy="14" r="1.7" fill="#fff" stroke={BLUE} /><circle cx="14" cy="14" r="1.7" fill="#fff" stroke={BLUE} /><circle cx="8.5" cy="8.5" r="1.5" stroke={BLUE} /></Icon></button>
      </div>
    </div>
  );
}

const Divider = ({ className }) => <span className={clsx('h-4 border-l border-[#8f8f8f]', className)} />;

function StatusBar() {
  return (
    <footer className="flex h-5 shrink-0 items-center bg-[#f0f0f0] text-[7px] text-[#333]">
      <p className="w-[254px] pl-[5px]">&gt; Locate Back Station</p>
      <span className="h-4 border-l-2 border-dotted border-gray-400" />
      <button aria-label="Messages" className="ml-1 border-r border-gray-500 pr-px">
        <Icon w={14}><path d="M7 1c8 0 8 9 1 10l-1 3-1-3C-1 10-1 1 7 1z" fill="#dbe8f7" stroke="#7fa3d0" /><path d="M7 5.500V10M7 2.500v2" stroke="#1d3f9c" strokeWidth="2" /></Icon>
      </button>
      <div className="ml-auto flex items-center">
        <Divider />
        <button aria-label="Snap mode" className="ml-[2px]"><Icon w={16}><path d="M2 14l8-2 4-10" stroke="#333" /><circle cx="2.5" cy="13.5" r="1.7" fill="#fff" stroke={BLUE} /><circle cx="10" cy="12" r="1.7" fill="#fff" stroke={BLUE} /><circle cx="14" cy="2.5" r="1.7" fill="#fff" stroke={BLUE} /></Icon></button>
        <Divider className="ml-px mr-[5px]" />
        <button aria-label="Locks"><Icon w={10}><path d="M2.500 5V3a2.500 2.500 0 0 1 5 0v2" stroke="#777" strokeWidth="1.3" /><path d="M.5 4.500h9v5h-9z" fill="#b39b22" /><path d="M.5 6.500h9" stroke="#dccc63" /></Icon></button>
        <Divider className="ml-1" />
        <span className="w-[86px] pl-[2px]">Default</span>
        <Divider className="mr-[77px]" />
        <Divider className="mr-[19px]" />
        <Divider className="mr-[19px]" />
        <Divider className="mr-[19px]" />
        <Divider className="mr-1" />
        <Icon w={13}><path d="M3 1h8v4H3zM2 8h9v4H2z" fill="#fff" stroke="#999" /><path d="M11 3l1 2-2 3" stroke="#999" /></Icon>
        <Divider className="ml-[2px] mr-[19px]" />
        <Divider className="mr-[19px]" />
        <Divider className="mr-1" />
        <Icon w={12}><path d="M2 0h8v12H2z" fill="#1b78c8" /><path d="M0 2h2M0 5h2M0 8h2M10 2h2M10 5h2M10 8h2" stroke="#1b78c8" /></Icon>
        <Divider className="ml-[3px] mr-[19px]" />
        <Divider className="mr-[5px]" />
        <Icon w={10} className="mr-[6px]"><path d="M.5.5h9v9h-9z" stroke="#bbb" /><path d="M3 2.500h4V6L5 8 3 6z" stroke="#777" /></Icon>
      </div>
    </footer>
  );
}

const taskApps = [
  ['File Explorer', <Icon w={15}><path d="M1 2h5l1 1h7v10H1z" fill="#f2c55a" /><path d="M1 6h13v7H1z" fill="#fbe19a" /><path d="M4 13V9h7v4H9.500v-2h-4v2z" fill="#3f9fd8" /></Icon>],
  ['Skype', <Icon w={15}><circle cx="7" cy="7" r="6" fill="#1a9bdc" /><path d="M9.500 4.500C8 3 4.800 3.500 5 5.300c.2 1.700 4.500 1.200 4.500 3.200 0 1.800-3.500 2-5 .5" stroke="#fff" strokeWidth="1.4" /><circle cx="12" cy="12" r="3" fill="#c8242b" /><path d="M10.500 12h3" stroke="#fff" /></Icon>],
  ['OpenRoads Designer', <AppLogo w={15} />],
  ['Internet Explorer', <Icon w={16}><path d="M12.500 11A5 5 0 1 1 13 8H4" stroke="#45b6ea" strokeWidth="2.2" /><path d="M1 14C-1 10 9 0 15 2" stroke="#e9c64a" strokeWidth="1.2" /></Icon>],
  ['Outlook', <Icon w={15}><path d="M7 4h7v7H7z" fill="#fff" stroke="#1470bf" /><path d="M8 5l3 3 3-3" stroke="#1470bf" /><path d="M1 2.500L9 1.500v12l-8-1z" fill="#0f66b5" /><circle cx="5" cy="7.5" r="2" stroke="#fff" strokeWidth="1.2" /></Icon>],
  ['Word', <Icon w={15}><path d="M7 3h7v9H7z" fill="#fff" stroke="#2a5599" /><path d="M9 5h4M9 7h4M9 9h4" stroke="#2a5599" /><path d="M1 2.500L9 1.500v12l-8-1z" fill="#2a5599" /><path d="M2.500 5.500l1 4L5 6l1.500 3.500 1-4" stroke="#fff" strokeWidth="1.1" /></Icon>],
  ['Paint 3D', <Icon w={13} h={16}><path d="M6.500 0C2 0 0 3 1 6c1 4 5 5 5 10C10 12 12 9 12.500 6 13 2 10 0 6.500 0z" fill="#4a86e8" /><path d="M6.500 0C2 0 0 3 1 6l5 4 3-9z" fill="#e05fae" /><path d="M1 6c1 4 5 5 5 10l3-8z" fill="#8e4fd8" /></Icon>],
  ['Chrome', <Icon w={14}><circle cx="7" cy="7" r="6.5" fill="#e9c02f" /><path d="M1.200 4A6.500 6.500 0 0 1 13 4.500H7L4 8z" fill="#dc4437" /><path d="M1.200 4A6.500 6.500 0 0 0 6.500 13.500L9.500 8.500H4.500z" fill="#2ea04f" /><circle cx="7" cy="7" r="3" fill="#3c7fe8" stroke="#fff" /></Icon>],
  ['Camtasia', <Icon w={15}><path d="M0 0h15v15H0z" fill="#e2503f" /><path d="M11 4.500H4.500v6H11" stroke="#fff" strokeWidth="2" /></Icon>],
];

function Taskbar() {
  return (
    <div className="flex h-[25px] shrink-0 bg-[#050914] text-white">
      <button aria-label="Start" className="flex w-[30px] items-center justify-center">
        <Icon w={11}><path d="M0 1.500L5 1v4H0zM6 .8L11 0v5H6zM0 6h5v4.200L0 9.500zM6 6h5v5l-5-.7z" fill="#fff" /></Icon>
      </button>
      <label className="flex w-[215px] items-center bg-[#f0f0f0] px-[6px]">
        <Icon w={14}><circle cx="7" cy="7" r="5.5" stroke="#111" strokeWidth="1.7" /></Icon>
        <input aria-label="Type here to search" placeholder="Type here to search" className="ml-[5px] min-w-0 flex-1 text-[8px] outline-none placeholder:text-[#444]" />
        <Icon w={7} h={11} className="mr-[3px]"><path d="M2 .5h3v6H2z" stroke="#333" /><path d="M.5 5v3h6V5M3.500 8v3" stroke="#333" /></Icon>
      </label>
      <button aria-label="Task view" className="ml-[3px] flex w-6 items-center justify-center"><Icon w={11}><path d="M.5 3.500h6v4h-6zM0 .5h7M0 10.500h7M9.500 0v3M9.500 8v3M9.500 5v1.500" stroke="#ddd" /></Icon></button>
      <div className="ml-1 flex">
        {taskApps.map(([name, icon], i) => (
          <button key={name} aria-label={name} className={clsx('flex w-[31px] justify-center px-[3px]', i === 2 && 'bg-[#33373f]')}>
            <span className="flex w-full items-center justify-center border-b-2 border-[#76b0e0]">{icon}</span>
          </button>
        ))}
      </div>
      <div className="ml-auto flex items-center pr-3">
        <button aria-label="People"><Icon w={10}><circle cx="3.5" cy="5" r="1.8" stroke="#eee" /><path d="M.5 10c0-4 6-4 6 0" stroke="#eee" /><circle cx="7.5" cy="2" r="1.5" stroke="#eee" /><path d="M6 5c2-1.500 3.500 0 3.500 2" stroke="#eee" /></Icon></button>
        <button aria-label="Hidden icons" className="ml-[13px]"><Icon w={8} h={5}><path d="M.5 4.500L4 1l3.500 3.500" stroke="#eee" /></Icon></button>
        <button aria-label="Battery" className="ml-[6px]"><Icon w={10} h={8}><path d="M1 2.500h8v4H1z" fill="#eee" stroke="#eee" /><path d="M2 0v2" stroke="#eee" /></Icon></button>
        <button aria-label="Network" className="ml-[5px]"><Icon w={10} h={9}><path d="M1 1h8.500v5H1zM5 6v2.500M3 8.500h4" stroke="#eee" /></Icon></button>
        <button aria-label="Volume" className="ml-[5px]"><Icon w={10} h={8}><path d="M.5 3h2l2-2v6l-2-2h-2z" stroke="#eee" /><path d="M6 2.500q1 1.500 0 3M8 1.500q1.500 2.500 0 5" stroke="#999" /></Icon></button>
        <time className="ml-1 w-[40px] text-center text-[7px] leading-[11px]">10:40 AM<br />10/22/2019</time>
        <button aria-label="Notifications" className="ml-2 flex items-center">
          <Icon w={15}>
            <path d="M1 1h9v7H5l-2 2V8H1z" fill="#fff" />
            <circle cx="10" cy="10" r="4.5" fill="#4b4f57" />
            <text x="10" y="12.5" fontSize="7" textAnchor="middle" fill="#fff">5</text>
          </Icon>
        </button>
      </div>
    </div>
  );
}

function StationDialog() {
  const [back, setBack] = useState(false);
  const field = 'h-[11px] w-[55px] border border-[#a0a0a0] bg-white pl-px text-[7px] outline-none';
  return (
    <div role="dialog" aria-label="Add Station" className="absolute left-[882px] top-[30px] w-[118px] border border-[#b3b3b3] bg-white shadow-md">
      <div className="flex h-[18px] items-center pl-1 pr-[11px] text-[7px] text-gray-400">
        <Icon w={11}><path d="M1 10L6 2" stroke="#666" strokeWidth="1.8" /><path d="M5 5h5v5H5zM5 7.500h5M7.500 5v5" stroke="#777" strokeWidth="1.2" /><circle cx="7" cy="2.5" r="2" fill="#888" /></Icon>
        <span className="ml-[2px] flex-1">A...</span>
        <button aria-label="Minimize dialog"><Icon w={7}><path d="M0 3.500h7" stroke="#ccc" /></Icon></button>
        <button aria-label="Maximize dialog" className="ml-[22px]"><Icon w={6}><path d="M.5.5h5v5h-5z" stroke="#e5e5e5" /></Icon></button>
        <button aria-label="Close dialog" className="ml-[23px]"><Icon w={7}><path d="M.5.5l6 6M6.500.5l-6 6" stroke="#999" /></Icon></button>
      </div>
      <div className="flex flex-col gap-[2px] border-t border-[#ddd] bg-[#f0f0f0] py-[2px] pl-[3px] font-['Liberation_Sans',sans-serif] text-[7px] text-[#222]">
        <div className="flex h-[11px] items-center pl-[11px]">
          <label htmlFor="ahead" className="w-[45px] whitespace-nowrap">Ahead Station</label>
          <input id="ahead" defaultValue="A 0+00.00" className={field} />
        </div>
        <div className="flex h-[11px] items-center">
          <input id="useBack" type="checkbox" aria-label="Use back station" checked={back} onChange={() => setBack(!back)} className="mr-[3px] h-2 w-2 appearance-none border border-[#333] bg-white" />
          <label htmlFor="back" className="w-[45px]">Back Station</label>
          <input id="back" defaultValue="5+08.8758" className={field} />
        </div>
        <div className="flex h-[11px] items-center pl-[11px]">
          <label htmlFor="distance" className="w-[45px]">Distance</label>
          <input id="distance" defaultValue="508.876'" className={field} />
        </div>
      </div>
    </div>
  );
}

function CivilPalette() {
  return (
    <div className="absolute left-[81px] top-[160px] w-[40px] border border-[#d5d5d5] bg-white shadow-md">
      <div className="flex h-[19px] items-center pl-1 text-[7px] text-gray-400">
        <span className="flex-1 whitespace-nowrap">Civil ...</span>
        <span className="h-3 w-3 bg-[#e3e3e3]" />
      </div>
      <div className="flex h-5 items-center gap-[3px] bg-[#f0f0f0] pl-[3px]">
        <button aria-label="Civil toggles"><Gear w={14} /></button>
        <button aria-label="Feature toggle" className="relative">
          <Icon w={15}><circle cx="4" cy="10" r="2.5" fill="#bbb" stroke="#777" /><path d="M4 7l2 3 5-8" stroke="#259a2d" strokeWidth="1.7" /></Icon>
          <Caret className="absolute -bottom-[2px] right-0 text-black" />
        </button>
      </div>
    </div>
  );
}

export default function App() {
  return (
    <div className="relative flex h-screen flex-col overflow-hidden bg-[#f0f0f0] font-['Open_Sans',sans-serif] leading-[10px]">
      <TitleBar />
      <TabBar />
      <Ribbon />
      <KeyinBar />
      <div className="flex min-h-0 flex-1">
        <div className="w-[13px] shrink-0 bg-[#8b939d]">
          <button className="flex h-[54px] w-3 flex-col items-center border border-[#8a8a8a] bg-[#b9b9bb] pt-1 text-[7px] text-[#333]">
            <Icon w={8}><path d="M0 1h8v6H0z" fill="#e8f5fd" stroke="#2492d6" /><circle cx="2.5" cy="4" r="2" fill="#2492d6" /></Icon>
            <span className="mt-[3px] [writing-mode:vertical-rl]">Properties</span>
          </button>
        </div>
        <Explorer />
        <ViewWindow />
      </div>
      <SnapBar />
      <StatusBar />
      <Taskbar />
      <StationDialog />
      <CivilPalette />
    </div>
  );
}
